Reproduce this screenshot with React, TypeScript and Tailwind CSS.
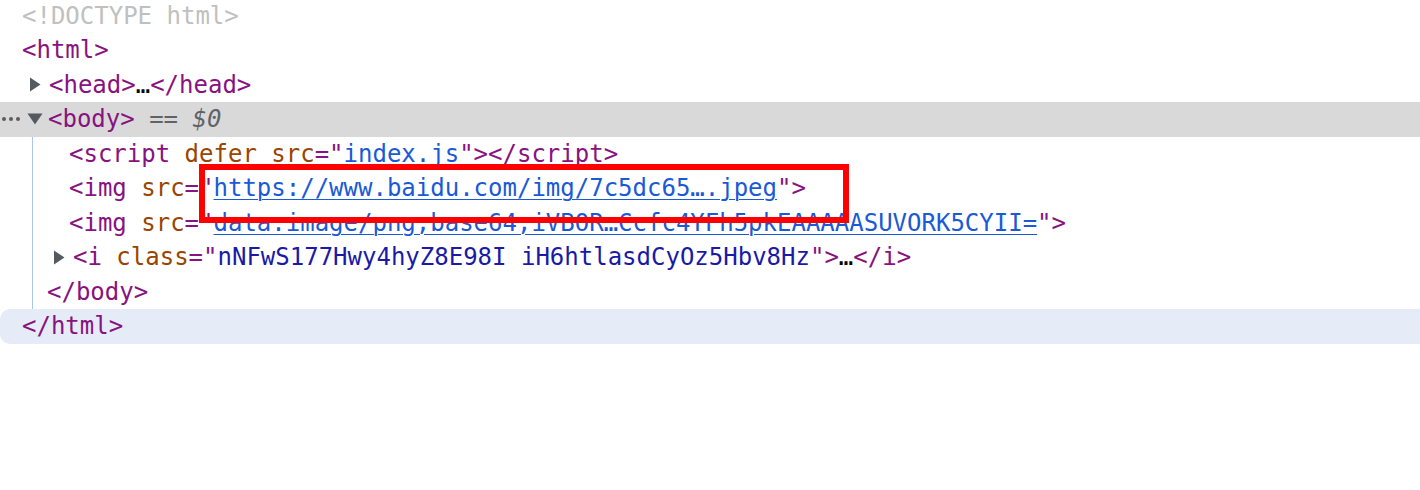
import React from "react";

const T = "text-[#881280]";
const A = "text-[#994500]";
const L = "text-[#1a5ad6] underline decoration-1 underline-offset-[3px]";

function RightTri() {
  return (
    <svg width="12" height="15" viewBox="0 0 12 15" className="shrink-0">
      <path d="M1 0.5 L11.5 7.5 L1 14.5 Z" fill="#555a60" />
    </svg>
  );
}

function DownTri() {
  return (
    <svg width="16" height="12" viewBox="0 0 16 12" className="shrink-0">
      <path d="M0.5 0.5 L15.5 0.5 L8 11.5 Z" fill="#555a60" />
    </svg>
  );
}

export default function App() {
  return (
    <div
      className="relative w-[1420px] h-[490px] bg-white overflow-hidden text-[24px] leading-[34.5px] whitespace-pre"
      style={{ fontFamily: '"DejaVu Sans Mono", monospace' }}
    >
      <div className="flex flex-col -mt-[1.5px]">
        <div className="h-[34.5px] flex items-center pl-[22px] text-[#c0c0c0]">
          {"<!DOCTYPE html>"}
        </div>
        <div className={`h-[34.5px] flex items-center pl-[22px] ${T}`}>{"<html>"}</div>
        <div className="h-[34.5px] flex items-center pl-[29px]">
          <RightTri />
          <span className={`ml-[8px] ${T}`}>{"<head>"}</span>
          <span className="text-black">…</span>
          <span className={T}>{"</head>"}</span>
        </div>
        <div className="h-[34.5px] flex items-center bg-[#d9d9d9]">
          <div className="flex gap-[3px] pl-[2px] w-[27px] items-center">
            <span className="w-[4px] h-[4px] rounded-full bg-[#5c5c5c]" />
            <span className="w-[4px] h-[4px] rounded-full bg-[#5c5c5c]" />
            <span className="w-[4px] h-[4px] rounded-full bg-[#5c5c5c]" />
          </div>
          <DownTri />
          <span className={`ml-[5px] ${T}`}>{"<body>"}</span>
          <span className="text-[#5f6368]">{" == "}</span>
          <span className="text-[#5f6368] italic">$0</span>
        </div>
        <div className="flex">
          <div className="w-[33px] shrink-0 border-r border-[#a8c5f5]" />
          <div className="flex flex-col flex-1">
            <div className="h-[34.5px] flex items-center pl-[36px]">
              <span className={T}>{"<script"}</span>
              <span className={A}>{" defer src"}</span>
              <span className={T}>{'="'}</span>
              <span className={L}>index.js</span>
              <span className={T}>{'"></script>'}</span>
            </div>
            <div className="h-[34.5px] flex items-center pl-[36px]">
              <span className={T}>{"<img"}</span>
              <span className={A}>{" src"}</span>
              <span className={T}>{'="'}</span>
              <span className={L}>https://www.baidu.com/img/7c5dc65….jpeg</span>
              <span className={T}>{'">'}</span>
            </div>
            <div className="h-[34.5px] flex items-center pl-[36px]">
              <span className={T}>{"<img"}</span>
              <span className={A}>{" src"}</span>
              <span className={T}>{'="'}</span>
              <span className={L}>data:image/png;base64,iVBOR…Ccfc4YFh5pkEAAAAASUVORK5CYII=</span>
              <span className={T}>{'">'}</span>
            </div>
            <div className="h-[34.5px] flex items-center pl-[20px]">
              <RightTri />
              <span className={`ml-[8px] ${T}`}>{"<i"}</span>
              <span className={A}>{" class"}</span>
              <span className={T}>{'="'}</span>
              <span className="text-[#1a1aa6]">nNFwS177Hwy4hyZ8E98I iH6htlasdCyOz5Hbv8Hz</span>
              <span className={T}>{'">'}</span>
              <span className="text-black">…</span>
              <span className={T}>{"</i>"}</span>
            </div>
            <div className={`h-[34.5px] flex items-center pl-[14px] ${T}`}>{"</body>"}</div>
          </div>
        </div>
        <div className={`h-[34.5px] flex items-center pl-[22px] bg-[#e5ecf8] rounded-l-[10px] ${T}`}>
          {"</html>"}
        </div>
      </div>
      <div className="absolute left-[199px] top-[164px] w-[650px] h-[59px] border-[6px] border-[#ff0000]" />
    </div>
  );
}
